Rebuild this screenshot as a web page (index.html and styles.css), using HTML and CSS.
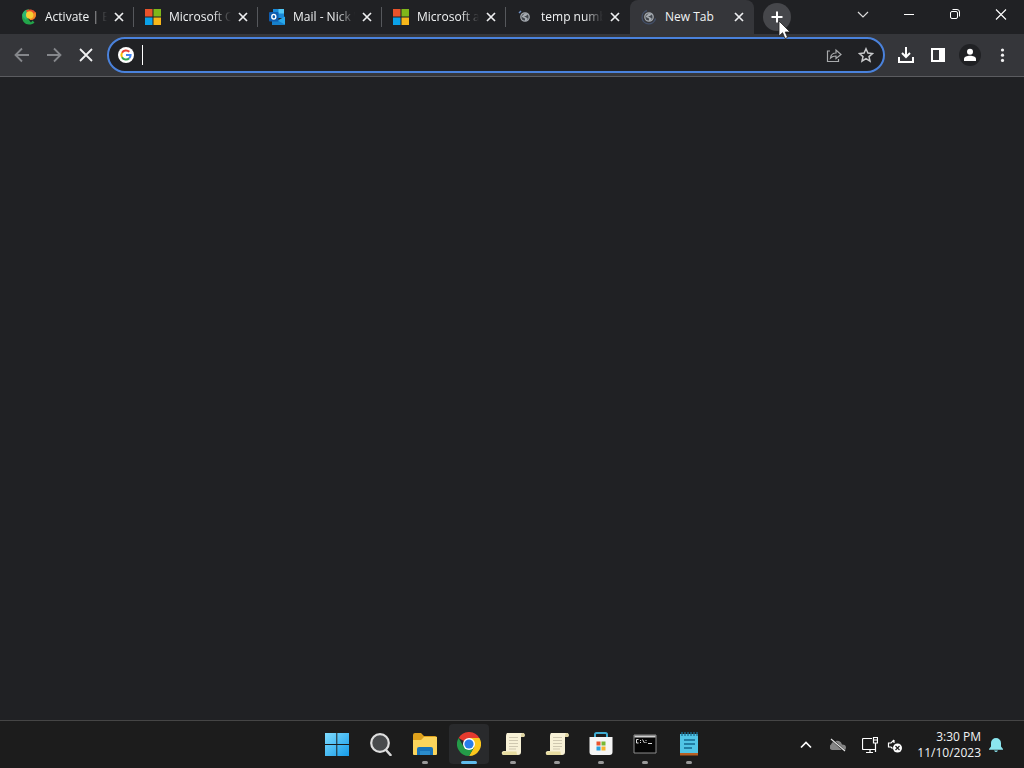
FILE: index.html
```html
<!DOCTYPE html>
<html lang="en">
<head>
<meta charset="utf-8">
<title>New Tab</title>
<link rel="stylesheet" href="styles.css">
</head>
<body>
<svg class="defs" aria-hidden="true">
  <symbol id="close" viewBox="0 0 16 16"><path d="M4 4l8 8M12 4l-8 8" stroke="#eeeff1" stroke-width="1.7" fill="none"/></symbol>
  <symbol id="ms" viewBox="0 0 16 16"><path fill="#e8532b" d="M0 0h7.500v7.500H0z"/><path fill="#7fb71a" d="M8.500 0H16v7.500H8.500z"/><path fill="#0ba2e8" d="M0 8.500h7.500V16H0z"/><path fill="#f7b71a" d="M8.500 8.500H16V16H8.500z"/></symbol>
  <symbol id="globe" viewBox="0 0 16 16"><circle cx="8" cy="8" r="4.200" fill="#41464d" stroke="#a4a9af" stroke-width="1.300"/><path d="M5 7l3-3 3 1-2 2H7l3 2 1 1-2 2H8V9.500L5 8z" fill="#a4a9af"/></symbol>
  <symbol id="scroll" viewBox="0 0 24 24"><path d="M6 1h16c2 0 2.500 4 0 4h-2v15c0 2-1 3-3 3H3c-3 0-3-4 0-4h2V4C5 2 6 1 6 1z" fill="#f7f1d6"/><path d="M2 19.500h13.500c0 2 .5 3.500 2 3.500H3c-2 0-2.500-2-1-3.500z" fill="#e7dca0"/><path d="M22 1c2 0 2.500 4 0 4h-2c0-2 0-4 2-4z" fill="#ded3a0"/><path d="M8 5.500h9M8 8.500h9M8 11.500h9M8 14.500h9M8 17h7" stroke="#c9c3ac" stroke-width=".9"/></symbol>
</svg>
<div class="window">
  <header class="titlebar">
    <nav class="tabs" aria-label="Tabs">
      <div class="tab">
        <svg class="favicon" viewBox="0 0 16 16"><path d="M8 .5C3 .5 1 4 1 8s3 7.500 7 7.500c2.500 0 4-.5 5.500-2L11 11H8L5 5z" fill="#22a54a"/><path d="M1.200 6C2 2.500 4.500.5 8 .5L8 6 5 11 2 8z" fill="#2bb673"/><path d="M5 1.300C10-1 15 1.500 15 5.500S12 11.500 9 11z" fill="#e8502c"/><path d="M14.500 3c1.500 4-1 8-5.500 8L8 8z" fill="#f08b24"/><circle cx="8.700" cy="6" r="3.700" fill="#f7cd32"/><path d="M8 11h4l-2 2.500z" fill="#202124"/></svg>
        <a class="title" href="#">Activate | Es</a>
        <button class="tab-close" aria-label="Close"><svg class="i16"><use href="#close"/></svg></button>
      </div>
      <div class="tab">
        <svg class="favicon"><use href="#ms"/></svg>
        <a class="title" href="#">Microsoft Of</a>
        <button class="tab-close" aria-label="Close"><svg class="i16"><use href="#close"/></svg></button>
      </div>
      <div class="tab">
        <svg class="favicon" viewBox="0 0 16 16"><path d="M4 0h11v9H4z" fill="#1989d8"/><path d="M9.500 0H15v4.500H9.500z" fill="#50c6f5"/><path d="M3 7.500L9.500 11 16 7.500V15q0 1-1 1H4q-1 0-1-1z" fill="#28a8ea"/><path d="M3 8.500L16 15.500q-.5.500-1 .5H4q-1 0-1-1z" fill="#1680cc"/><rect y="3" width="9.500" height="9.500" rx="1" fill="#0f5cae"/><ellipse cx="4.800" cy="7.700" rx="2" ry="2.300" fill="none" stroke="#fff" stroke-width="1.400"/></svg>
        <a class="title" href="#">Mail - Nick W</a>
        <button class="tab-close" aria-label="Close"><svg class="i16"><use href="#close"/></svg></button>
      </div>
      <div class="tab">
        <svg class="favicon"><use href="#ms"/></svg>
        <a class="title" href="#">Microsoft ac</a>
        <button class="tab-close" aria-label="Close"><svg class="i16"><use href="#close"/></svg></button>
      </div>
      <div class="tab before-active">
        <svg class="favicon" viewBox="0 0 16 16"><use href="#globe"/><path d="M2 4l2-2" stroke="#6d8fc4" stroke-width="1.500" fill="none"/></svg>
        <a class="title" href="#">temp numbe</a>
        <button class="tab-close" aria-label="Close"><svg class="i16"><use href="#close"/></svg></button>
      </div>
      <div class="tab active">
        <svg class="favicon" viewBox="0 0 16 16"><use href="#globe"/><path d="M6 1.500a6.800 6.800 0 1 0 8.500 8" stroke="#43506a" stroke-width="1.300" fill="none"/></svg>
        <a class="title" href="#">New Tab</a>
        <button class="tab-close" aria-label="Close"><svg class="i16"><use href="#close"/></svg></button>
      </div>
    </nav>
    <button class="new-tab" aria-label="New tab"><svg class="i16" viewBox="0 0 16 16"><path d="M8 2.500v11M2.500 8h11" stroke="#fff" stroke-width="2"/></svg>
      <svg class="cursor" viewBox="0 0 14 20"><path d="M1 1v15l3.600-3.300L7 18.500l2.600-1.100L7.200 12H12z" fill="#fff" stroke="#222" stroke-width=".8"/></svg>
    </button>
    <div class="caption">
      <button aria-label="Search tabs"><svg class="i16" viewBox="0 0 16 16"><path d="M3 5l5 5 5-5" fill="none" stroke="#dcdcdc" stroke-width="1.200"/></svg></button>
      <button aria-label="Minimize"><svg class="i16" viewBox="0 0 16 16"><path d="M3 7.500h10" stroke="#fff"/></svg></button>
      <button aria-label="Restore"><svg class="i16" viewBox="0 0 16 16"><g fill="none" stroke="#fff"><rect x="3.500" y="4.500" width="7" height="7" rx="1.500"/><path d="M5.500 2.500H10A2.500 2.500 0 0 1 12.500 5v4.500"/></g></svg></button>
      <button aria-label="Close window"><svg class="i16" viewBox="0 0 16 16"><path d="M3 2.500l10 10M13 2.500l-10 10" stroke="#fff" stroke-width="1.100"/></svg></button>
    </div>
  </header>
  <div class="toolbar">
    <div class="tools">
      <button aria-label="Back"><svg class="i16" viewBox="0 0 16 16"><path d="M15 8H2M8 1.500L1.500 8 8 14.500" fill="none" stroke="#85878b" stroke-width="1.800"/></svg></button>
      <button aria-label="Forward"><svg class="i16" viewBox="0 0 16 16"><path d="M1 8h13M8 1.500L14.500 8 8 14.500" fill="none" stroke="#85878b" stroke-width="1.800"/></svg></button>
      <button aria-label="Stop"><svg class="i16" viewBox="0 0 16 16"><path d="M2 2l12 12M14 2L2 14" stroke="#f1f1f2" stroke-width="1.800"/></svg></button>
    </div>
    <div class="omnibox">
      <svg class="i16" viewBox="0 0 16 16"><circle cx="8" cy="8" r="8" fill="#fff"/><g fill="none" stroke-width="2"><path d="M4 5.700A4.600 4.600 0 0 1 11.300 4.800" stroke="#ea4335"/><path d="M4 10.300a4.600 4.600 0 0 1 0-4.600" stroke="#fbbc05"/><path d="M11.200 11.300A4.600 4.600 0 0 1 4 10.300" stroke="#34a853"/><path d="M8 8h4.600a4.600 4.600 0 0 1-1.400 3.300" stroke="#4285f4"/></g></svg>
      <span class="caret"></span>
      <input type="text" aria-label="Address and search bar">
      <button aria-label="Share"><svg class="i16" viewBox="0 0 16 16"><path d="M4 4H1.500v10.500h11V12M4.500 11c.5-3.500 2.500-5 5.500-5V3l5 4.500-5 4V9c-2.500 0-4 .5-5.500 2z" fill="none" stroke="#a9abad" stroke-width="1.200"/></svg></button>
      <button aria-label="Bookmark"><svg class="i16" viewBox="0 0 16 16"><path d="M8 1.800l1.900 4.300 4.600.4L11 9.600l1 4.600-4-2.500-4 2.500 1-4.600-3.500-3.100 4.600-.4z" fill="none" stroke="#c8c9cb" stroke-width="1.500"/></svg></button>
    </div>
    <div class="tools">
      <button aria-label="Downloads"><svg class="i16" viewBox="0 0 16 16"><path d="M8 0v9.500M4 6l4 4 4-4M1 10v5h14v-5" fill="none" stroke="#fff" stroke-width="2"/></svg></button>
      <button aria-label="Side panel"><svg class="i16" viewBox="0 0 16 16"><path fill-rule="evenodd" d="M1 1h14v14H1zM3 3v10h6V3z" fill="#fff"/></svg></button>
      <button aria-label="Profile"><svg class="i22" viewBox="0 0 22 22"><circle cx="11" cy="11" r="11" fill="#202124"/><circle cx="11" cy="7.700" r="3" fill="#fff"/><path d="M5 17v-2c0-2 3-3.200 6-3.200s6 1.200 6 3.200v2z" fill="#fff"/></svg></button>
      <button aria-label="Menu"><svg class="i16" viewBox="0 0 16 16"><g fill="#f1f1f2"><circle cx="8.500" cy="3" r="1.600"/><circle cx="8.500" cy="8.200" r="1.600"/><circle cx="8.500" cy="13.400" r="1.600"/></g></svg></button>
    </div>
  </div>
  <main class="page"></main>
  <footer class="taskbar">
    <div class="apps">
      <button class="app" aria-label="Start"><svg class="i24" viewBox="0 0 24 24"><defs><linearGradient id="w" x2="1" y2="1"><stop stop-color="#7fdcff"/><stop offset="1" stop-color="#159be8"/></linearGradient></defs><path d="M0 1h11.300v11H0zM12.300 1H24v11H12.300zM0 13h11.300v11H0zM12.300 13H24v11H12.300z" fill="url(#w)"/></svg></button>
      <button class="app" aria-label="Search"><svg class="i24" viewBox="0 0 24 24"><path d="M17 18l4.500 5" stroke="#d8d8d8" stroke-width="2.600" stroke-linecap="round"/><circle cx="11" cy="11" r="8.800" fill="#484a4c" stroke="#dedede" stroke-width="2.200"/></svg></button>
      <button class="app open" aria-label="File Explorer"><svg class="i24" viewBox="0 0 24 24"><path d="M0 3q0-2 2-2h6l3 3h11q2 0 2 2v3H0z" fill="#dea11c"/><path d="M0 8h8l3-3h13v17q0 1-1 1H1q-1 0-1-1z" fill="#fbd45b"/><path d="M4 23v-6q0-2 2-2h12q2 0 2 2v6z" fill="#1873b9"/><path d="M7 19h10v4H7z" fill="#2b8dcd"/></svg></button>
      <button class="app open current" aria-label="Chrome"><svg class="i24" viewBox="0 0 24 24"><path d="M12 12L1.600 6A12 12 0 0 1 22.400 6z" fill="#e43b2f"/><path d="M12 12V6h10.400A12 12 0 0 1 12 24l5.200-9z" fill="#fbc71d"/><path d="M1.600 6A12 12 0 0 0 12 24l5.200-9L12 12 6.800 15z" fill="#249b48"/><circle cx="12" cy="12" r="6" fill="#fff"/><circle cx="12" cy="12" r="4.600" fill="#287de9"/></svg></button>
      <button class="app open" aria-label="Script"><svg class="i24"><use href="#scroll"/></svg></button>
      <button class="app open" aria-label="Script"><svg class="i24"><use href="#scroll"/></svg></button>
      <button class="app open" aria-label="Store"><svg class="i24" viewBox="0 0 24 24"><path d="M6 7V2.500Q6 1 7.500 1h9Q18 1 18 2.500V7" fill="none" stroke="#3facd2" stroke-width="2"/><path d="M.5 5h23v15q0 3-3 3h-17q-3 0-3-3z" fill="#f5f5f5"/><path d="M7.500 9.500h4v4h-4z" fill="#e9532d"/><path d="M12.500 9.500h4v4h-4z" fill="#78b832"/><path d="M7.500 14.500h4v4h-4z" fill="#279fdc"/><path d="M12.500 14.500h4v4h-4z" fill="#f5b52c"/></svg></button>
      <button class="app open" aria-label="Command Prompt"><svg class="i24" viewBox="0 0 24 24"><path d="M1 3h22v18H1z" fill="#060606" stroke="#8b8b8b"/><path d="M1.500 3.500h21v2h-21z" fill="#d0d0d0"/><path d="M5.500 7.500H3.500v3.500h2M7.500 8v1M7.500 10v1M9.500 7.500l2 3.500M13 8v1M13 10v1M15 11.500h4" fill="none" stroke="#ddd"/></svg></button>
      <button class="app open" aria-label="Notepad"><svg class="i24" viewBox="0 0 24 24"><path d="M3 2h18v20H3z" fill="#51c4e6"/><path d="M3 21h18v2.500H3z" fill="#b75f24"/><path d="M5 0v4M8 0v4M11 0v4M14 0v4M17 0v4M20 0v4" stroke="#1b6e93" stroke-width="1.300"/><path d="M7 8h11M7 12h11M7 16h8" stroke="#14678f" stroke-width="1.700"/></svg></button>
    </div>
    <div class="tray">
      <button class="tray-button" aria-label="Hidden icons"><svg class="i16" viewBox="0 0 16 16"><path d="M3 10.500l5-5 5 5" fill="none" stroke="#fff" stroke-width="1.700"/></svg></button>
      <button class="tray-button" aria-label="OneDrive"><svg class="i16" viewBox="0 0 16 16"><path d="M2 13a3 3 0 0 1-1-5.500 4 4 0 0 1 3.500-3 5 5 0 0 1 7.500 3q4 0 4 3.200T13 13z" fill="#858585"/><path d="M2 2.500l13 12" stroke="#1c1c1c" stroke-width="2.200"/><path d="M1 2l14 12" stroke="#e7e7e7" stroke-width="1.100"/></svg></button>
      <button class="tray-button" aria-label="Network"><svg class="i16" viewBox="0 0 16 16"><path d="M10 1.500H1.500q-1 0-1 1v9q0 1 1 1H14M8 12.500v3M4 15.500h7M11.500.5h4V6h-4zM13.500 6v9M12 3h3" fill="none" stroke="#fff" stroke-width="1.200"/></svg></button>
      <button class="tray-button sound" aria-label="Sound"><svg class="i16" viewBox="0 0 16 16"><path d="M7 3L4 6H1.500v4H4l1.500 1.500M7 3v3" fill="none" stroke="#fff" stroke-width="1.200"/><circle cx="10.500" cy="11" r="4.500" fill="#fff"/><path d="M8.500 9l4 4m0-4l-4 4" stroke="#1c1c1c" stroke-width="1.200"/></svg></button>
      <button class="clock"><span>3:30 PM</span><span>11/10/2023</span></button>
      <button class="bell" aria-label="Notifications"><svg class="i16" viewBox="0 0 16 16"><path d="M1 12l2-2.500V6a5 5 0 0 1 10 0v3.500l2 2.500v.8H1zM6 13.500h4q-2 3-4 0z" fill="#8be5ee"/></svg></button>
    </div>
  </footer>
</div>
</body>
</html>
```
FILE: styles.css
```css
* { box-sizing: border-box; }
body {
  margin: 0;
  background: #202124;
  color: #f1f3f4;
  font: 12px/16px "Open Sans", "Noto Sans", sans-serif;
}
button {
  display: flex;
  align-items: center;
  justify-content: center;
  padding: 0;
  border: 0;
  background: none;
  color: inherit;
  font: inherit;
}
svg { flex: none; }
.defs { position: absolute; width: 0; height: 0; }
.i16, .favicon { width: 16px; height: 16px; }
.i22 { width: 22px; height: 22px; }
.i24 { width: 24px; height: 24px; }
.window { display: flex; flex-direction: column; min-height: 100vh; }

.titlebar { display: flex; height: 34px; padding-left: 10px; }
.tabs { display: flex; min-width: 0; }
.tab {
  display: flex;
  align-items: center;
  width: 124px;
  padding: 0 7px 0 11px;
  background: linear-gradient(#56585c, #56585c) right center / 1px 20px no-repeat;
}
.before-active { background: none; }
.active { background: #35363a; border-radius: 8px 8px 0 0; }
.title {
  flex: 1;
  min-width: 0;
  margin-left: 8px;
  overflow: hidden;
  white-space: nowrap;
  color: inherit;
  text-decoration: none;
  mask-image: linear-gradient(to right, #000 70%, transparent);
}
.active .title { mask-image: none; }
.tab-close { margin-left: 4px; }
.new-tab {
  position: relative;
  align-self: center;
  width: 28px;
  height: 28px;
  margin-left: 9px;
  border-radius: 50%;
  background: #46474b;
}
.cursor { position: absolute; left: 15px; top: 17px; width: 14px; height: 20px; }
.caption { display: flex; margin-left: auto; }
.caption button { width: 46px; height: 30px; }

.toolbar {
  display: flex;
  align-items: center;
  gap: 5px;
  height: 43px;
  padding: 0 6px;
  background: #35363a;
  border-bottom: 1px solid #5b5c60;
}
.tools { display: flex; }
.tools button { width: 32px; height: 32px; }
.omnibox {
  display: flex;
  flex: 1;
  align-items: center;
  height: 36px;
  padding: 0 1px 0 9px;
  border: 2px solid #4a82dc;
  border-radius: 18px;
  background: #202124;
}
.caret { width: 1px; height: 20px; margin-left: 8px; background: #fff; }
.omnibox input {
  flex: 1;
  min-width: 0;
  border: 0;
  outline: 0;
  background: none;
  color: inherit;
  font: inherit;
}
.omnibox button { width: 32px; height: 32px; }
.page { flex: 1; }

.taskbar {
  display: grid;
  grid-template-columns: 1fr auto 1fr;
  height: 48px;
  border-top: 1px solid #454545;
  background: #1c1c1c;
}
.apps { display: flex; grid-column: 2; gap: 4px; align-items: center; padding: 0 0 2px 2px; }
.app { position: relative; width: 40px; height: 40px; border-radius: 4px; }
.open::after {
  content: "";
  position: absolute;
  bottom: 0;
  width: 6px;
  height: 3px;
  border-radius: 2px;
  background: #999;
}
.current { background: #292a2c; }
.current::after { width: 16px; background: #60bcec; }
.tray { display: flex; align-items: center; justify-content: flex-end; padding-right: 20px; }
.tray-button { width: 32px; height: 40px; }
.tray-button.sound { width: 18px; }
.clock { flex-direction: column; align-items: flex-end; margin-left: 13px; }
.bell { margin-left: 7px; }
```
